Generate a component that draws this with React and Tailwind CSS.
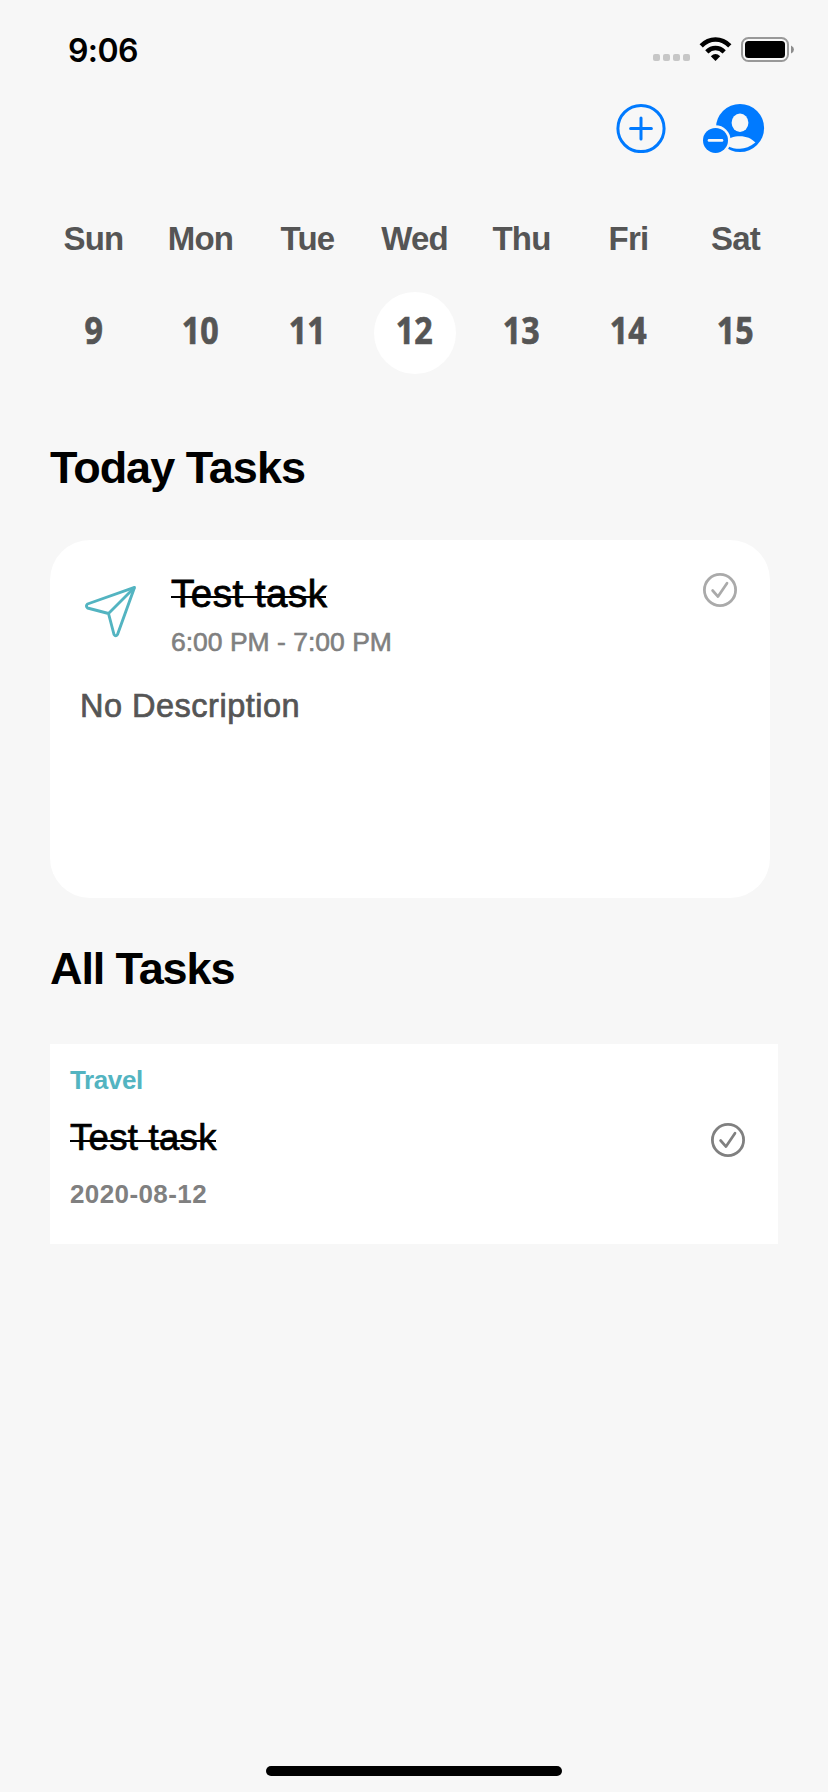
const days = [
  ["Sun", 9],
  ["Mon", 10],
  ["Tue", 11],
  ["Wed", 12],
  ["Thu", 13],
  ["Fri", 14],
  ["Sat", 15],
];

function StatusBar() {
  return (
    <div className="flex h-[100px] items-start justify-between pl-[68px] pr-[34px] pt-[30px]">
      <div className="h-10 pt-px font-['Inter',sans-serif] text-[32px] leading-10 font-semibold tracking-[-0.6px]">9:06</div>
      <svg width="142" height="26" viewBox="652 36 142 26" className="mt-[6px]">
        <g fill="#c7c7c7">
          <rect x="653" y="54" width="7" height="7" rx="2" />
          <rect x="663" y="54" width="7" height="7" rx="2" />
          <rect x="673" y="54" width="7" height="7" rx="2" />
          <rect x="683" y="54" width="7" height="7" rx="2" />
        </g>
        <g fill="none" stroke="#000" strokeWidth="4.6">
          <path d="M701.2 45.8C709.5 37.4 721.5 37.4 729.8 45.8" />
          <path d="M706.8 51.8C712 46.8 719 46.8 724.2 51.8" />
        </g>
        <path d="M710.8 56.2Q715.5 52 720.2 56.2L715.5 61Z" />
        <rect x="742" y="38" width="46" height="23" rx="6.5" fill="none" stroke="#999" strokeWidth="2" />
        <rect x="745" y="41" width="40" height="17" rx="3.5" />
        <path d="M791 45.5Q794 46.8 794 49.5T791 53.5Z" fill="#8c8c8c" />
      </svg>
    </div>
  );
}

function Toolbar() {
  return (
    <div className="flex h-14 items-center justify-end gap-[37px] pr-[63px]">
      <svg width="50" height="50" viewBox="0 -0.5 50 50" fill="none" stroke="#007aff">
        <circle cx="25" cy="25" r="23.1" strokeWidth="3" />
        <path d="M25 14.6V35.4M14.6 25H35.4" strokeWidth="3" strokeLinecap="round" />
      </svg>
      <svg width="62" height="50" viewBox="0 -0.4 62 50">
        <circle cx="37" cy="24.6" r="24.1" fill="#007aff" />
        <ellipse cx="37" cy="19.3" rx="8.4" ry="9.2" fill="#f7f7f7" />
        <path d="M20 40.5C25 34 31 32.8 37 32.8C43 32.8 49 35 52.4 39.2C47 43.5 42 45.4 37 45.4C32 45.4 28.5 44.5 24.5 42.5Z" fill="#f7f7f7" />
        <circle cx="12.5" cy="37" r="15.1" fill="#f7f7f7" />
        <circle cx="12.5" cy="37" r="12.5" fill="#007aff" />
        <path d="M6 37H19" stroke="#f7f7f7" strokeWidth="2.6" strokeLinecap="round" />
      </svg>
    </div>
  );
}

function WeekStrip() {
  return (
    <div className="mt-[60px] ml-10 grid w-[749px] grid-cols-7 text-center text-[#555]">
      {days.map(([name, date]) => (
        <div key={name} className="flex flex-col items-center">
          <div className="h-[46px] text-[33px] leading-[46px] font-bold tracking-[-0.8px]">{name}</div>
          <div
            className={
              "mt-[30px] flex size-[82px] items-center justify-center rounded-full pb-1.5 " +
              (date === 12 ? "bg-white" : "")
            }
          >
            <span className="inline-block scale-x-[0.87] font-['Open_Sans',sans-serif] text-[37px] leading-[40px] font-bold [-webkit-text-stroke:0.7px_currentColor]">
              {date}
            </span>
          </div>
        </div>
      ))}
    </div>
  );
}

function CheckCircle({ className }) {
  return (
    <svg width="36" height="36" viewBox="0 0 36 36" fill="none" stroke="currentColor" className={className}>
      <circle cx="18" cy="18" r="15.6" strokeWidth="2.8" />
      <path d="M10.6 18.5L16 24.6L25 11.2" strokeWidth="2.7" strokeLinecap="round" strokeLinejoin="round" />
    </svg>
  );
}

function DoneTitle({ className }) {
  return (
    <div className={"relative h-[44px] w-fit leading-[44px] whitespace-nowrap " + className}>
      Test task
      <span className="absolute top-[24px] right-[1px] left-0 h-[2px] bg-black" />
    </div>
  );
}

function TodayCard() {
  return (
    <section className="ml-[50px] h-[358px] w-[720px] rounded-[40px] bg-white px-[30px]">
      <div className="flex h-[136px] items-start">
        <svg
          width="56"
          height="56"
          viewBox="82 582 56 56"
          fill="none"
          stroke="#53b4c1"
          strokeWidth="2.9"
          strokeLinejoin="round"
          className="mt-[42px] ml-[2px]"
        >
          <path d="M134.5 587.4L87.5 604Q85.3 606 87.5 608L108.5 613.5L114 634.5Q115.7 637 117.5 634.5Z" />
          <path d="M108.5 613.5L134.5 587.4" />
        </svg>
        <div className="ml-[33px] flex-1 pt-[32px]">
          <DoneTitle className="text-[38.5px] tracking-[0.5px] [-webkit-text-stroke:0.8px_currentColor]" />
          <div className="mt-[10px] h-[32px] text-[26.5px] leading-[32px] text-[#808080] [-webkit-text-stroke:0.6px_currentColor]">
            6:00 PM - 7:00 PM
          </div>
        </div>
        <CheckCircle className="mt-8 mr-[2px] text-[#aaa]" />
      </div>
      <p className="mt-[10px] h-10 text-[32.5px] leading-10 tracking-[0.5px] text-[#555] [-webkit-text-stroke:0.7px_currentColor]">
        No Description
      </p>
    </section>
  );
}

function TaskRow() {
  return (
    <section className="ml-[50px] flex h-[200px] w-[728px] items-start bg-white pr-8 pl-5">
      <div className="flex-1 pt-5">
        <div className="h-8 text-[26px] leading-8 font-bold tracking-[-0.4px] text-[#53b4c1]">Travel</div>
        <DoneTitle className="mt-[20px] text-[36.5px] tracking-[0.3px] [-webkit-text-stroke:0.7px_currentColor]" />
        <div className="mt-[18px] h-8 text-[26px] leading-8 font-bold tracking-[0.4px] text-[#808080]">2020-08-12</div>
      </div>
      <CheckCircle className="mt-[78px] text-[#808080]" />
    </section>
  );
}

export default function App() {
  return (
    <div className="flex h-[1792px] w-[828px] flex-col overflow-hidden bg-[#f7f7f7] font-['Liberation_Sans',sans-serif] text-black">
      <StatusBar />
      <Toolbar />
      <WeekStrip />
      <h1 className="mt-[79px] mb-[57px] ml-[50px] h-[30px] text-[45px] leading-[30px] font-bold tracking-[-1px]">Today Tasks</h1>
      <TodayCard />
      <h1 className="mt-[56px] mb-[60px] ml-[50px] h-[30px] text-[45px] leading-[30px] font-bold tracking-[-1.1px]">All Tasks</h1>
      <TaskRow />
      <div className="mt-auto mb-4 h-[10px] w-[296px] self-center rounded-full bg-black" />
    </div>
  );
}
